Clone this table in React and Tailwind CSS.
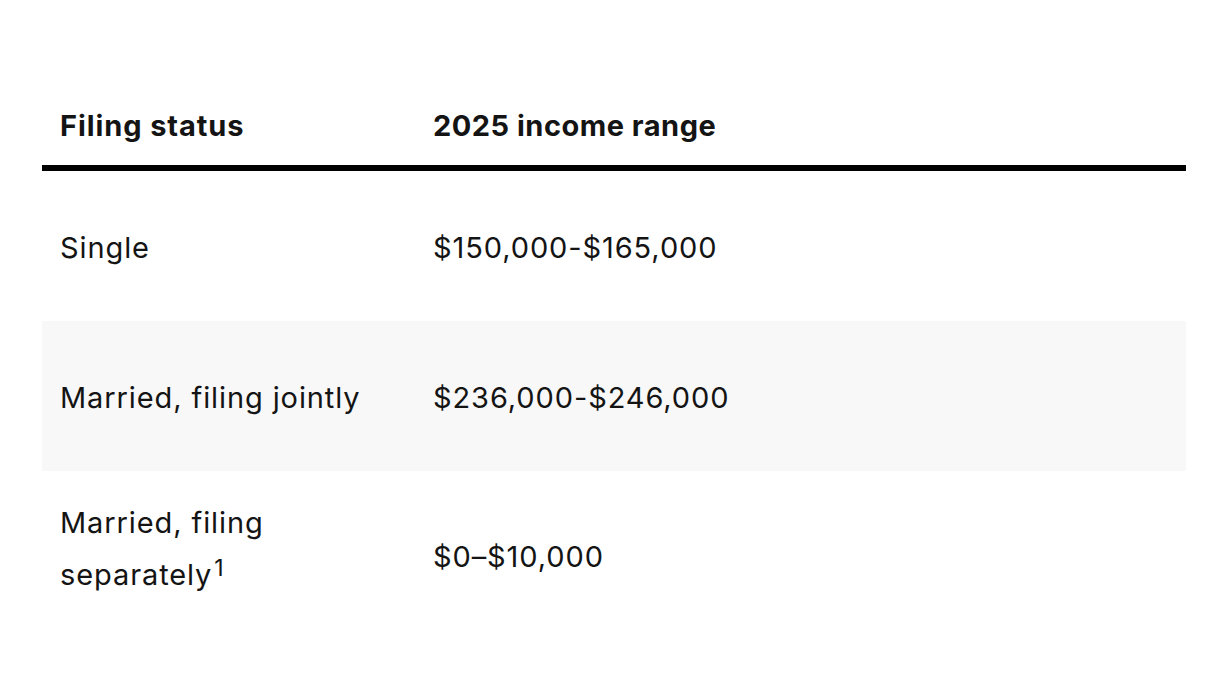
const rows = [
  { status: 'Single', range: '$150,000-$165,000' },
  { status: 'Married, filing jointly', range: '$236,000-$246,000', shaded: true },
  { status: 'Married, filing separately', note: '1', range: '$0–$10,000' },
]

export default function App() {
  return (
    <div className="min-h-screen bg-white pt-[90px] px-[42px] text-[#141414] font-['Inter',sans-serif] tracking-[0.9px]">
      <table className="w-[1144px] border-separate border-spacing-0 text-left text-[29px]">
        <thead>
          <tr>
            <th className="w-[391px] pl-[18px] pt-[15px] pb-[18px] leading-[42px] font-bold border-b-[6px] border-black">
              Filing status
            </th>
            <th className="pt-[15px] pb-[18px] leading-[42px] font-bold tracking-[0.5px] border-b-[6px] border-black">
              2025 income range
            </th>
          </tr>
        </thead>
        <tbody>
          {rows.map((r) => (
            <tr key={r.status} className={r.note ? '' : `h-[150px] ${r.shaded ? 'bg-[#f8f8f8]' : ''}`}>
              <td
                className={`pl-[18px] pr-[40px] align-middle leading-[52px] ${
                  r.note ? 'pt-[26px] pb-[42px]' : 'pt-[35px] pb-[31px]'
                }`}
              >
                {r.status}
                {r.note && (
                  <sup className="top-[-9px] ml-[2px] text-[23px] tracking-normal">{r.note}</sup>
                )}
              </td>
              <td className={`align-middle leading-[52px] ${r.note ? 'py-[34px]' : 'pt-[35px] pb-[31px]'}`}>
                {r.range}
              </td>
            </tr>
          ))}
        </tbody>
      </table>
    </div>
  )
}
